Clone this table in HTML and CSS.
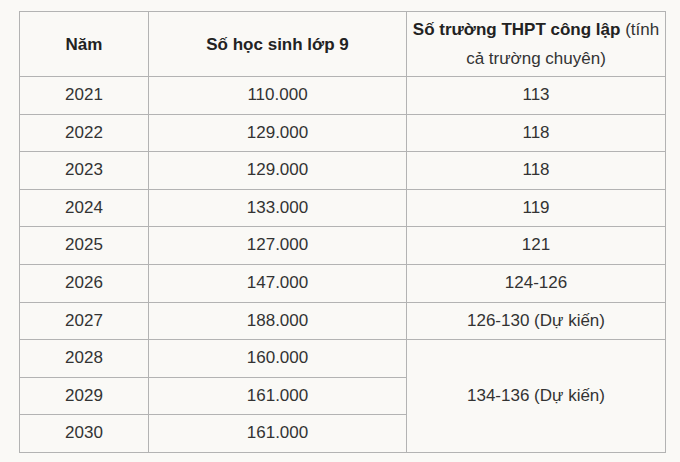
FILE: index.html
```html
<!DOCTYPE html>
<html lang="vi">
<head>
<meta charset="utf-8">
<link rel="stylesheet" href="styles.css">
</head>
<body>
<table class="data">
  <colgroup>
    <col class="c1"><col class="c2"><col class="c3">
  </colgroup>
  <thead>
    <tr>
      <th><strong>Năm</strong></th>
      <th><strong>Số học sinh lớp 9</strong></th>
      <th><strong>Số trường THPT công lập</strong> (tính cả trường chuyên)</th>
    </tr>
  </thead>
  <tbody>
    <tr><td>2021</td><td>110.000</td><td>113</td></tr>
    <tr><td>2022</td><td>129.000</td><td>118</td></tr>
    <tr><td>2023</td><td>129.000</td><td>118</td></tr>
    <tr><td>2024</td><td>133.000</td><td>119</td></tr>
    <tr><td>2025</td><td>127.000</td><td>121</td></tr>
    <tr><td>2026</td><td>147.000</td><td>124-126</td></tr>
    <tr><td>2027</td><td>188.000</td><td>126-130 (Dự kiến)</td></tr>
    <tr><td>2028</td><td>160.000</td><td rowspan="3">134-136 (Dự kiến)</td></tr>
    <tr><td>2029</td><td>161.000</td></tr>
    <tr><td>2030</td><td>161.000</td></tr>
  </tbody>
</table>
</body>
</html>
```
FILE: styles.css
```css
html, body {
  margin: 0;
  padding: 0;
  background: #faf9f6;
}
body {
  padding: 11px 15px 0 19px;
  font-family: "Liberation Sans", Arial, sans-serif;
  font-size: 17px;
  color: #333;
}
.data {
  border-collapse: collapse;
  width: 646px;
  table-layout: fixed;
}
.c1 { width: 129px; }
.c2 { width: 258px; }
.c3 { width: 259px; }
.data th, .data td {
  border: 1px solid #b3b3b3;
  padding: 5px 6px;
  line-height: 26.6px;
  text-align: center;
  vertical-align: middle;
  font-weight: normal;
}
.data th {
  padding: 3px 4px;
  line-height: 29px;
}
.data strong {
  font-weight: bold;
  color: #222;
}
```
